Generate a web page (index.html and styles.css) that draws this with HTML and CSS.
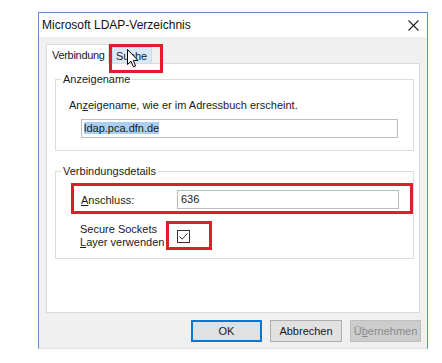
FILE: index.html
```html
<!DOCTYPE html>
<html lang="de">
<head>
    <meta charset="UTF-8">
    <title>Microsoft LDAP-Verzeichnis</title>
    <link rel="stylesheet" href="styles.css">
</head>
<body>
    <div class="window">
        <div class="titlebar">
            <span class="title">Microsoft LDAP-Verzeichnis</span>
            <svg class="close" width="11" height="11" viewBox="0 0 11 11">
                <path d="M0.5 0.5 L10.5 10.5 M10.5 0.5 L0.5 10.5" stroke="#222" stroke-width="1.1" fill="none"/>
            </svg>
        </div>

        <div class="dialog-body">
            <div class="tabs">
                <div class="tab tab-active">Verbindung</div>
                <div class="tab tab-hover">Suche</div>
                <div class="mark mark-tab"></div>
                <svg class="cursor" width="12" height="19" viewBox="0 0 12 19">
                    <path d="M0.5 0.5 L0.5 15.5 L4 12.2 L6.4 17.8 L8.6 16.9 L6.3 11.4 L11 11.4 Z" fill="#fff" stroke="#000" stroke-width="1" stroke-linejoin="round"/>
                </svg>
            </div>

            <div class="panel">
                <fieldset class="group">
                    <legend>Anzeigename</legend>
                    <div class="hint">An<u>z</u>eigename, wie er im Adressbuch erscheint.</div>
                    <div class="textbox textbox-wide"><span class="selected">ldap.pca.dfn.de</span></div>
                </fieldset>

                <fieldset class="group group-details">
                    <legend>Verbindungsdetails</legend>
                    <div class="field-row">
                        <span class="field-label"><u>A</u>nschluss:</span>
                        <div class="textbox textbox-port">636</div>
                        <div class="mark mark-row"></div>
                    </div>
                    <div class="field-row field-row-ssl">
                        <span class="field-label field-label-ssl">Secure Sockets<br><u>L</u>ayer verwenden</span>
                        <div class="checkbox">
                            <svg width="11" height="11" viewBox="0 0 11 11">
                                <path d="M1.5 5.5 L4.2 8.2 L9.5 2.3" stroke="#333" stroke-width="1" fill="none"/>
                            </svg>
                        </div>
                        <div class="mark mark-check"></div>
                    </div>
                </fieldset>
            </div>

            <div class="buttons">
                <button class="btn btn-default">OK</button>
                <button class="btn">Abbrechen</button>
                <button class="btn btn-disabled">Ü<u>b</u>ernehmen</button>
            </div>
        </div>
    </div>
</body>
</html>
```

FILE: styles.css
```css
body {
    margin: 0;
    background: #fff;
    font-family: "Liberation Sans", Arial, sans-serif;
    font-size: 11px;
    color: #1a1a1a;
}

.window {
    width: 390px;
    margin: 12px 0 0 38px;
    border: 1px solid #5a8fc8;
    border-bottom-color: #e2e2e2;
    box-sizing: border-box;
}

.titlebar {
    height: 24px;
    background: #fff;
    display: flex;
    align-items: center;
    justify-content: space-between;
    padding: 0 8px 0 3px;
}

.title {
    font-size: 12px;
    color: #111;
}

.close {
    margin-top: 1px;
}

.dialog-body {
    background: #f0f0f0;
    padding: 0 6px 6px 7px;
}

.tabs {
    height: 26px;
    display: flex;
    align-items: flex-end;
    position: relative;
    z-index: 1;
}

.tab {
    box-sizing: border-box;
    line-height: 14px;
}

.tab-active {
    width: 63px;
    height: 20px;
    padding: 3px 0 0 5px;
    background: #fff;
    border: 1px solid #dadada;
    border-bottom: none;
    margin-bottom: -1px;
    letter-spacing: -0.3px;
}

.tab-hover {
    width: 40px;
    height: 16px;
    padding: 1px 0 0 3px;
    margin-left: 3px;
    background: #d8e8f7;
    border: 1px solid #c6dcf1;
    border-bottom: none;
}

.mark {
    position: absolute;
    border: 3px solid #dc1f2b;
    box-sizing: border-box;
    pointer-events: none;
}

.mark-tab {
    left: 63px;
    top: 7px;
    width: 54px;
    height: 29px;
}

.cursor {
    position: absolute;
    left: 81px;
    top: 12px;
}

.panel {
    box-sizing: border-box;
    height: 250px;
    width: 374px;
    background: #fff;
    border: 1px solid #dadada;
    padding-top: 8px;
}

.group {
    margin: 0 5px 0 8px;
    padding: 0 5px 12px 5px;
    border: 1px solid #dcdcdc;
    min-width: 0;
}

.group legend {
    padding: 0 2px;
    line-height: 14px;
}

.hint {
    margin: 12px 0 0 8px;
    line-height: 14px;
}

.textbox {
    box-sizing: border-box;
    height: 19px;
    border: 1px solid #bdbdbd;
    background: #fff;
    padding: 1px 2px;
    line-height: 15px;
}

.textbox-wide {
    margin: 7px 0 0 20px;
    width: 317px;
}

.selected {
    background: #aacff1;
}

.group-details {
    margin-top: 13px;
    padding-bottom: 9px;
}

.field-row {
    display: grid;
    grid-template-columns: 96px 222px;
    align-items: center;
    margin: 12px 0 0 20px;
    position: relative;
}

.field-row-ssl {
    margin-top: 14px;
    margin-left: 19px;
    grid-template-columns: 97px 222px;
}

.field-label-ssl {
    line-height: 13px;
}

.textbox-port {
    padding-left: 3px;
}

.checkbox {
    box-sizing: border-box;
    width: 13px;
    height: 13px;
    border: 1px solid #333;
    background: #fff;
}

.checkbox svg {
    display: block;
}

.mark-row {
    left: -10px;
    top: -7px;
    width: 342px;
    height: 31px;
}

.mark-check {
    left: 86px;
    top: -2px;
    width: 46px;
    height: 29px;
}

.buttons {
    display: flex;
    justify-content: flex-end;
    gap: 8px;
    margin-top: 7px;
}

.btn {
    box-sizing: border-box;
    width: 72px;
    height: 22px;
    font-family: inherit;
    font-size: 11px;
    color: #1a1a1a;
    background: #e1e1e1;
    border: 1px solid #adadad;
    padding: 0;
}

.btn-default {
    width: 71px;
    border: 2px solid #0078d7;
}

.btn-disabled {
    width: 71px;
    background: #cccccc;
    border-color: #bfbfbf;
    color: #8a8a8a;
}
```
